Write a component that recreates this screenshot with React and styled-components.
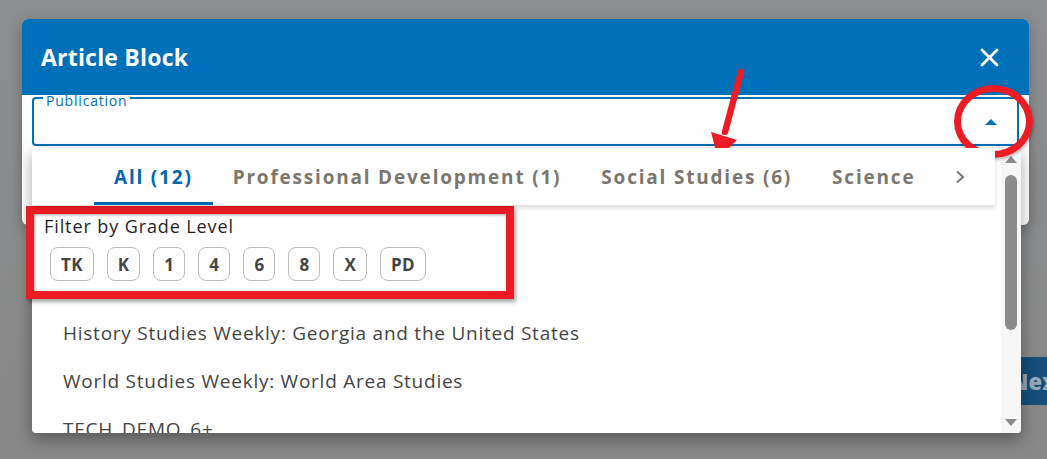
import React, { useState } from "react";
import styled, { createGlobalStyle } from "styled-components";

const FONT = `"Open Sans", "Noto Sans", "Liberation Sans", sans-serif`;
const BLUE = "#0070b8";
const RED = "#ec1c24";

const tabs = [
  { id: 0, label: "All (12)" },
  { id: 1, label: "Professional Development (1)" },
  { id: 2, label: "Social Studies (6)" },
  { id: 3, label: "Science (3)" },
  { id: 4, label: "Math (2)" },
];

const grades = ["TK", "K", "1", "4", "6", "8", "X", "PD"];

const publications = [
  "History Studies Weekly: Georgia and the United States",
  "World Studies Weekly: World Area Studies",
  "TECH_DEMO_6+",
  "Science Studies Weekly: Grade 4",
];

export default function App() {
  const [selected, setSelected] = useState(0);

  return (
    <Page>
      <GlobalStyle />
      <NextButton>Next</NextButton>

      <Modal>
        <Header>
          <Title>Article Block</Title>
          <CloseButton aria-label="close">
            <svg width="19" height="19" viewBox="0 0 19 19">
              <path d="M2 2 L17 17 M17 2 L2 17" stroke="#fff" strokeWidth="2.8" strokeLinecap="round" />
            </svg>
          </CloseButton>
        </Header>
        <Body>
          <Field>
            <Legend>Publication</Legend>
            <svg width="12" height="6" viewBox="0 0 12 6">
              <polygon points="0,6 6,0 12,6" fill={BLUE} />
            </svg>
          </Field>
        </Body>

        <Popover>
          <PopContent>
            <TabBar>
              <TabsScroller>
                {tabs.map((tab) => (
                  <Tab key={tab.id} $active={selected === tab.id} onClick={() => setSelected(tab.id)}>
                    {tab.label}
                  </Tab>
                ))}
              </TabsScroller>
              <ScrollButton>
                <svg width="10" height="14" viewBox="0 0 10 14">
                  <path d="M2 1.5 L8 7 L2 12.5" fill="none" stroke="#777" strokeWidth="2" />
                </svg>
              </ScrollButton>
            </TabBar>

            <FilterSection>
              <FilterTitle>Filter by Grade Level</FilterTitle>
              <ChipRow>
                {grades.map((g) => (
                  <Chip key={g}>{g}</Chip>
                ))}
              </ChipRow>
            </FilterSection>

            <List>
              {publications.map((p) => (
                <ListItem key={p}>{p}</ListItem>
              ))}
            </List>
          </PopContent>

          <Scrollbar>
            <svg width="12" height="7" viewBox="0 0 12 7">
              <polygon points="0,7 6,0 12,7" fill="#8a8a8a" />
            </svg>
            <Thumb />
            <svg width="12" height="7" viewBox="0 0 12 7">
              <polygon points="0,0 12,0 6,7" fill="#8a8a8a" />
            </svg>
          </Scrollbar>
        </Popover>
      </Modal>

      <RedFrame />
      <RedCircle />
      <ArrowMark width="50" height="105" viewBox="700 60 50 105">
        <line x1="741" y1="72" x2="725" y2="132" stroke={RED} strokeWidth="6.5" strokeLinecap="round" />
        <polygon points="711,132 737,140 718,159" fill={RED} />
      </ArrowMark>
    </Page>
  );
}

const GlobalStyle = createGlobalStyle`
  html, body {
    margin: 0;
    padding: 0;
  }
  body {
    background: #8a8b8c;
    font-family: ${FONT};
    overflow: hidden;
  }
  * {
    box-sizing: border-box;
  }
`;

const Page = styled.div`
  position: relative;
  width: 1047px;
  height: 459px;
  overflow: hidden;
  background: linear-gradient(to bottom, #8c8e90, #878787);
  display: flex;
  justify-content: flex-end;
  align-items: flex-start;
  padding-top: 357px;
`;

const NextButton = styled.button`
  height: 48px;
  margin-right: -31px;
  padding: 0 12px;
  border: none;
  background: #134f78;
  color: #93a8b8;
  font-family: ${FONT};
  font-weight: 800;
  font-size: 22px;
`;

const Modal = styled.div`
  position: absolute;
  left: 22px;
  top: 19px;
  width: 1007px;
  height: 206px;
  background: #fff;
  border-radius: 6px;
  box-shadow: 0 4px 14px rgba(0, 0, 0, 0.25);
`;

const Header = styled.div`
  height: 76px;
  background: ${BLUE};
  border-radius: 6px 6px 0 0;
  display: flex;
  align-items: center;
  justify-content: space-between;
  padding: 0 30px 0 19px;
`;

const Title = styled.h2`
  margin: 0;
  color: #fff;
  font-size: 23px;
  font-weight: 700;
  letter-spacing: 0.2px;
`;

const CloseButton = styled.button`
  padding: 0;
  border: none;
  background: none;
  display: flex;
`;

const Body = styled.div`
  padding: 2px 10px 0;
`;

const Field = styled.div`
  position: relative;
  height: 49px;
  border: 2px solid ${BLUE};
  border-radius: 4px;
  display: flex;
  align-items: center;
  justify-content: flex-end;
  padding-right: 20px;
`;

const Legend = styled.span`
  position: absolute;
  left: 9px;
  top: -5px;
  padding: 0 3px;
  font-size: 14px;
  line-height: 13px;
  letter-spacing: 0.8px;
  color: ${BLUE};
  background: linear-gradient(to bottom, transparent 2px, #fff 2px);
`;

const Popover = styled.div`
  position: absolute;
  left: 10px;
  top: 129px;
  width: 989px;
  height: 285px;
  background: #fff;
  border-radius: 4px;
  box-shadow: 0 6px 16px rgba(0, 0, 0, 0.35);
  display: flex;
  overflow: hidden;
`;

const PopContent = styled.div`
  flex: 1;
  min-width: 0;
  display: flex;
  flex-direction: column;
`;

const TabBar = styled.div`
  position: relative;
  z-index: 1;
  height: 57px;
  flex: none;
  display: flex;
  margin-right: 6px;
  padding: 0 8px 0 62px;
  background: #fff;
  box-shadow: 0 3px 5px rgba(0, 0, 0, 0.15);
`;

const TabsScroller = styled.div`
  flex: 1;
  min-width: 0;
  display: flex;
  overflow: hidden;
`;

const Tab = styled.div`
  flex: none;
  display: flex;
  align-items: center;
  padding: 3px 20px 0;
  white-space: nowrap;
  font-size: 19px;
  font-weight: 700;
  letter-spacing: 1.8px;
  color: ${(p) => (p.$active ? "#0067ad" : "#7c7670")};
  border-bottom: 3px solid ${(p) => (p.$active ? "#0067ad" : "transparent")};
  cursor: pointer;
`;

const ScrollButton = styled.div`
  width: 67px;
  flex: none;
  display: flex;
  align-items: center;
  justify-content: center;
  padding-left: 13px;
`;

const FilterSection = styled.div`
  padding: 9px 0 28px 12px;
`;

const FilterTitle = styled.div`
  font-size: 18px;
  line-height: 24px;
  font-weight: 500;
  letter-spacing: 0.9px;
  color: #1f1f1f;
`;

const ChipRow = styled.div`
  display: flex;
  gap: 13px;
  margin-top: 9px;
  padding-left: 6px;
`;

const Chip = styled.div`
  height: 34px;
  min-width: 30px;
  padding: 0 10px;
  display: flex;
  align-items: center;
  justify-content: center;
  border: 1px solid #bdbdbd;
  border-radius: 8px;
  font-size: 17px;
  font-weight: 700;
  letter-spacing: 0.3px;
  color: #444;
`;

const List = styled.div`
  display: flex;
  flex-direction: column;
`;

const ListItem = styled.div`
  height: 48px;
  flex: none;
  display: flex;
  align-items: center;
  padding-left: 31px;
  font-size: 19px;
  font-weight: 500;
  letter-spacing: 0.75px;
  color: #444;
  white-space: nowrap;
`;

const Scrollbar = styled.div`
  width: 20px;
  flex: none;
  background: #f7f7f7;
  display: flex;
  flex-direction: column;
  align-items: center;
  padding: 8px 0 7px;

  svg:last-child {
    margin-top: auto;
  }
`;

const Thumb = styled.div`
  width: 12px;
  height: 155px;
  margin-top: 12px;
  border-radius: 6px;
  background: #8c8c8c;
`;

const RedFrame = styled.div`
  position: absolute;
  left: 26px;
  top: 206px;
  width: 488px;
  height: 93px;
  border: 8px solid ${RED};
  box-shadow: 2px 3px 4px rgba(0, 0, 0, 0.35), inset 1px 1px 3px rgba(0, 0, 0, 0.35);
`;

const RedCircle = styled.div`
  position: absolute;
  left: 954px;
  top: 85px;
  width: 79px;
  height: 73px;
  border: 7px solid ${RED};
  border-radius: 50%;
  box-shadow: 1px 2px 3px rgba(0, 0, 0, 0.25);
`;

const ArrowMark = styled.svg`
  position: absolute;
  left: 700px;
  top: 60px;
  overflow: visible;
`;
